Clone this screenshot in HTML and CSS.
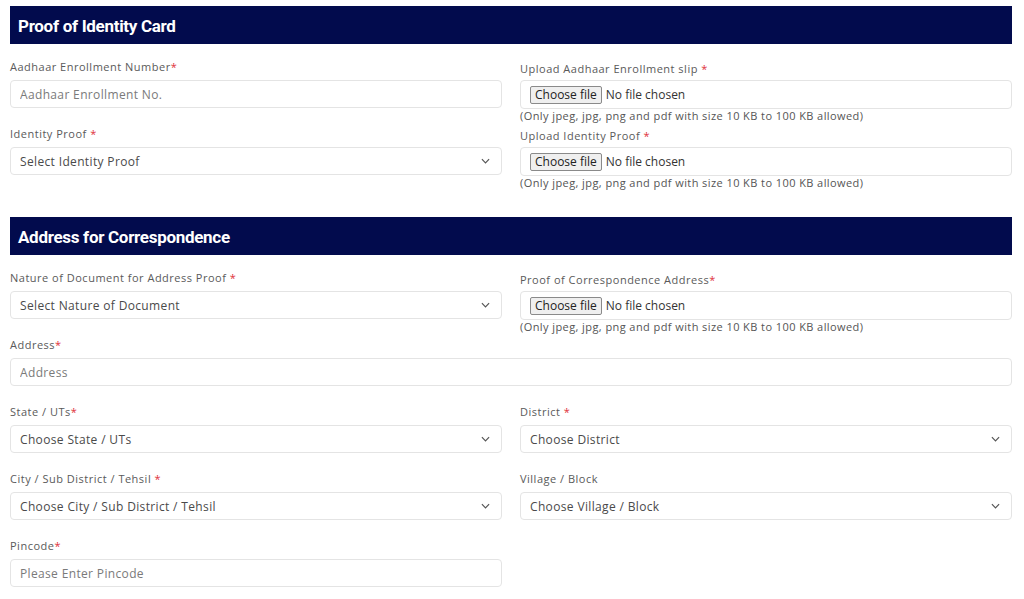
FILE: index.html
```html
<!DOCTYPE html>
<html>
<head>
    <title>Proof of Identity and Address</title>
    <link rel="stylesheet" href="styles.css">
</head>
<body>
    <div class="form-wrap">
        <div class="section">
            <h2 class="section-title">Proof of Identity Card</h2>
            <div class="form-grid">
                <div class="field">
                    <label>Aadhaar Enrollment Number<span class="req">*</span></label>
                    <input type="text" class="control" placeholder="Aadhaar Enrollment No.">
                </div>
                <div class="field file-field">
                    <label>Upload Aadhaar Enrollment slip <span class="req">*</span></label>
                    <div class="file-box">
                        <button class="file-btn">Choose file</button>
                        <span class="file-name">No file chosen</span>
                    </div>
                    <p class="hint">(Only jpeg, jpg, png and pdf with size 10 KB to 100 KB allowed)</p>
                </div>
                <div class="field">
                    <label>Identity Proof <span class="req">*</span></label>
                    <div class="control select">
                        <span>Select Identity Proof</span>
                        <svg class="chevron" viewBox="0 0 10 6"><path d="M1 1l4 4 4-4"/></svg>
                    </div>
                </div>
                <div class="field file-field">
                    <label>Upload Identity Proof <span class="req">*</span></label>
                    <div class="file-box">
                        <button class="file-btn">Choose file</button>
                        <span class="file-name">No file chosen</span>
                    </div>
                    <p class="hint">(Only jpeg, jpg, png and pdf with size 10 KB to 100 KB allowed)</p>
                </div>
            </div>
        </div>

        <div class="section">
            <h2 class="section-title">Address for Correspondence</h2>
            <div class="form-grid">
                <div class="field">
                    <label>Nature of Document for Address Proof <span class="req">*</span></label>
                    <div class="control select">
                        <span>Select Nature of Document</span>
                        <svg class="chevron" viewBox="0 0 10 6"><path d="M1 1l4 4 4-4"/></svg>
                    </div>
                </div>
                <div class="field file-field">
                    <label>Proof of Correspondence Address<span class="req">*</span></label>
                    <div class="file-box">
                        <button class="file-btn">Choose file</button>
                        <span class="file-name">No file chosen</span>
                    </div>
                    <p class="hint">(Only jpeg, jpg, png and pdf with size 10 KB to 100 KB allowed)</p>
                </div>
                <div class="field full">
                    <label>Address<span class="req">*</span></label>
                    <input type="text" class="control" placeholder="Address">
                </div>
                <div class="field">
                    <label>State / UTs<span class="req">*</span></label>
                    <div class="control select">
                        <span>Choose State / UTs</span>
                        <svg class="chevron" viewBox="0 0 10 6"><path d="M1 1l4 4 4-4"/></svg>
                    </div>
                </div>
                <div class="field">
                    <label>District <span class="req">*</span></label>
                    <div class="control select">
                        <span>Choose District</span>
                        <svg class="chevron" viewBox="0 0 10 6"><path d="M1 1l4 4 4-4"/></svg>
                    </div>
                </div>
                <div class="field">
                    <label>City / Sub District / Tehsil <span class="req">*</span></label>
                    <div class="control select">
                        <span>Choose City / Sub District / Tehsil</span>
                        <svg class="chevron" viewBox="0 0 10 6"><path d="M1 1l4 4 4-4"/></svg>
                    </div>
                </div>
                <div class="field">
                    <label>Village / Block</label>
                    <div class="control select">
                        <span>Choose Village / Block</span>
                        <svg class="chevron" viewBox="0 0 10 6"><path d="M1 1l4 4 4-4"/></svg>
                    </div>
                </div>
                <div class="field">
                    <label>Pincode<span class="req">*</span></label>
                    <input type="text" class="control" placeholder="Please Enter Pincode">
                </div>
            </div>
        </div>
    </div>
</body>
</html>
```

FILE: styles.css
```css
body {
    margin: 0;
    background: #ffffff;
    font-family: "Open Sans", Arial, sans-serif;
    color: #555;
}
.form-wrap {
    padding: 6px 12px 0 10px;
}
.section {
    margin-bottom: 23px;
}
.section:last-child { margin-bottom: 0; }
.section-title {
    margin: 0 0 16px;
    height: 38px;
    line-height: 40px;
    padding: 0 8px;
    background: #020b4d;
    color: #fff;
    font-family: Roboto, Arial, sans-serif;
    font-size: 17px;
    font-weight: 700;
    letter-spacing: -0.3px;
}
.form-grid {
    display: grid;
    grid-template-columns: 1fr 1fr;
    column-gap: 18px;
}
.field {
    min-height: 67px;
    display: flex;
    flex-direction: column;
}
.field.full { grid-column: 1 / 3; }
.section:last-child .field:last-child { min-height: 0; }

.field label {
    font-size: 11px;
    line-height: 14px;
    color: #5a5a5a;
    letter-spacing: 0.5px;
    margin-bottom: 6px;
}
.file-field label { margin-top: 2px; margin-bottom: 4px; }
.req { color: #e0313a; }

.control {
    box-sizing: border-box;
    height: 28px;
    width: 100%;
    border: 1px solid #e4e4e4;
    border-radius: 4px;
    padding: 0 9px;
    font-family: "Open Sans", Arial, sans-serif;
    font-size: 12px;
    letter-spacing: 0.35px;
    color: #555;
    background: #fff;
    outline: none;
}
.control::placeholder { color: #7a7a7a; }
.select {
    display: flex;
    align-items: center;
    justify-content: space-between;
    color: #4a4a4a;
}
.chevron {
    width: 9px;
    height: 6px;
    margin-right: 2px;
    fill: none;
    stroke: #555;
    stroke-width: 1.3;
}

.file-box {
    box-sizing: border-box;
    height: 29px;
    border: 1px solid #e4e4e4;
    border-radius: 4px;
    display: flex;
    align-items: center;
    padding: 0 9px;
}
.file-btn {
    font-family: "Open Sans", Arial, sans-serif;
    font-size: 12px;
    color: #222;
    background: #efefef;
    border: 1px solid #8a8a8a;
    border-radius: 2px;
    padding: 0 4px;
    height: 18px;
    line-height: 15px;
    margin-right: 4px;
}
.file-name {
    font-size: 12px;
    color: #333;
}
.hint {
    margin: 0;
    font-size: 11px;
    line-height: 14px;
    letter-spacing: 0.42px;
    color: #555;
}
```
